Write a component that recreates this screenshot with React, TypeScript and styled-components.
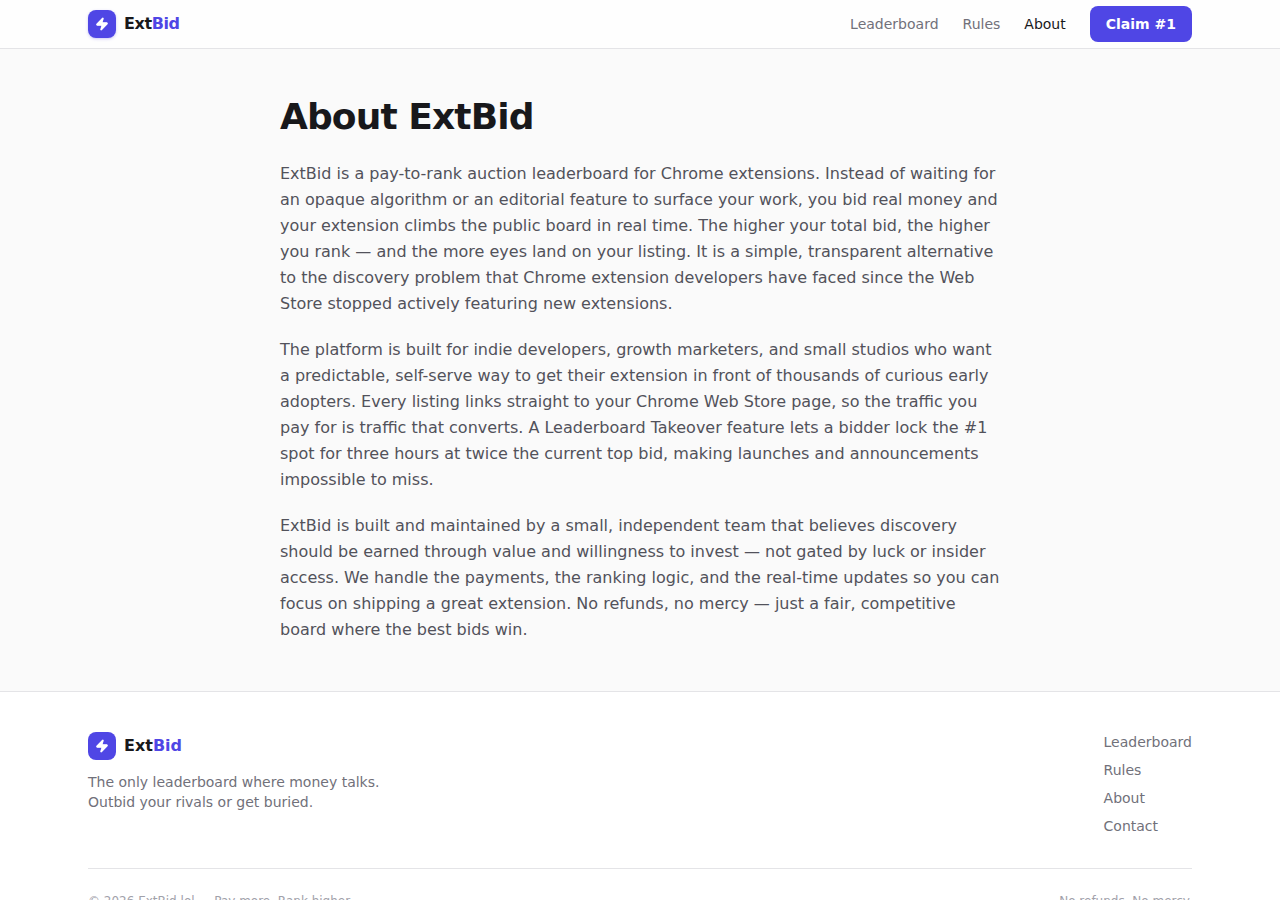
import React from 'react';
import styled, { createGlobalStyle } from 'styled-components';
import { Zap } from 'lucide-react';

const GlobalStyle = createGlobalStyle`
  *, *::before, *::after { box-sizing: border-box; }
  body {
    margin: 0;
    background: #fafafa;
    color: #18181b;
    font-family: "DejaVu Sans", sans-serif;
    font-size: 16px;
    line-height: 24px;
  }
  h1, p, ul { margin: 0; padding: 0; }
  ul { list-style: none; }
  a { color: inherit; text-decoration: none; }
`;

const Container = styled.div`
  max-width: 1152px;
  margin: 0 auto;
  padding: 0 24px;
`;

const Header = styled.header`
  background: #fefefe;
  border-bottom: 1px solid #e4e4e7;
`;

const HeaderRow = styled(Container)`
  display: flex;
  align-items: center;
  justify-content: space-between;
  height: 48px;
`;

const BrandMark = styled.span`
  display: flex;
  align-items: center;
  justify-content: center;
  width: 28px;
  height: 28px;
  border-radius: 8px;
  background: #4f46e5;
  color: #fff;
`;

const BrandLink = styled.a<{ $raised?: boolean }>`
  display: flex;
  align-items: center;
  gap: 8px;
  font-weight: 700;
  letter-spacing: ${(p) => (p.$raised ? '-0.025em' : 'normal')};

  ${BrandMark} {
    box-shadow: ${(p) => (p.$raised ? '0 1px 3px rgba(79, 70, 229, 0.3)' : 'none')};
  }
`;

const Accent = styled.span`
  color: #4f46e5;
`;

const Nav = styled.nav`
  display: flex;
  align-items: center;
  gap: 24px;
`;

const NavLink = styled.a<{ $active?: boolean }>`
  font-size: 14px;
  line-height: 20px;
  color: ${(p) => (p.$active ? '#18181b' : '#71717a')};
`;

const ClaimButton = styled.button`
  height: 36px;
  padding: 0 16px;
  border: 0;
  border-radius: 8px;
  background: #4f46e5;
  color: #fff;
  font: 600 14px/20px "DejaVu Sans", sans-serif;
  cursor: pointer;
`;

const Article = styled.main`
  max-width: 768px;
  margin: 0 auto;
  padding: 48px 24px;
`;

const Title = styled.h1`
  margin-bottom: 24px;
  font-size: 36px;
  line-height: 40px;
  font-weight: 700;
  letter-spacing: -0.025em;
`;

const Prose = styled.div`
  display: flex;
  flex-direction: column;
  gap: 20px;
  color: #52525b;
  line-height: 26px;
`;

const Footer = styled.footer`
  background: #fff;
  border-top: 1px solid #e4e4e7;
`;

const FooterInner = styled(Container)`
  padding-top: 40px;
  padding-bottom: 40px;
`;

const FooterTop = styled.div`
  display: flex;
  justify-content: space-between;
  gap: 32px;
`;

const Tagline = styled.p`
  max-width: 320px;
  margin-top: 12px;
  font-size: 14px;
  line-height: 20px;
  color: #71717a;
`;

const FooterLinks = styled.ul`
  display: flex;
  flex-direction: column;
  gap: 8px;
  font-size: 14px;
  line-height: 20px;
`;

const FooterItem = styled.li`
  display: flex;
`;

const Legal = styled.div`
  display: flex;
  justify-content: space-between;
  margin-top: 32px;
  padding-top: 24px;
  border-top: 1px solid #e4e4e7;
  font-size: 12px;
  line-height: 16px;
  color: #a1a1aa;
`;

function Brand({ raised }: { raised?: boolean }) {
  return (
    <BrandLink href="#home" $raised={raised}>
      <BrandMark>
        <Zap size={14} fill="currentColor" aria-hidden="true" />
      </BrandMark>
      <span>Ext<Accent>Bid</Accent></span>
    </BrandLink>
  );
}

const footerLinks = ['Leaderboard', 'Rules', 'About', 'Contact'];

export default function App() {
  return (
    <>
      <GlobalStyle />
      <Header>
        <HeaderRow>
          <Brand raised />
          <Nav aria-label="Main">
            <NavLink href="#leaderboard">Leaderboard</NavLink>
            <NavLink href="#rules">Rules</NavLink>
            <NavLink href="#about" $active aria-current="page">About</NavLink>
            <ClaimButton type="button">Claim #1</ClaimButton>
          </Nav>
        </HeaderRow>
      </Header>
      <Article>
        <Title>About ExtBid</Title>
        <Prose>
          <p>
            ExtBid is a pay-to-rank auction leaderboard for Chrome extensions. Instead of waiting for an opaque
            algorithm or an editorial feature to surface your work, you bid real money and your extension climbs
            the public board in real time. The higher your total bid, the higher you rank — and the more eyes
            land on your listing. It is a simple, transparent alternative to the discovery problem that Chrome
            extension developers have faced since the Web Store stopped actively featuring new extensions.
          </p>
          <p>
            The platform is built for indie developers, growth marketers, and small studios who want a
            predictable, self-serve way to get their extension in front of thousands of curious early adopters.
            Every listing links straight to your Chrome Web Store page, so the traffic you pay for is traffic
            that converts. A Leaderboard Takeover feature lets a bidder lock the #1 spot for three hours at
            twice the current top bid, making launches and announcements impossible to miss.
          </p>
          <p>
            ExtBid is built and maintained by a small, independent team that believes discovery should be earned
            through value and willingness to invest — not gated by luck or insider access. We handle the
            payments, the ranking logic, and the real-time updates so you can focus on shipping a great
            extension. No refunds, no mercy — just a fair, competitive board where the best bids win.
          </p>
        </Prose>
      </Article>
      <Footer>
        <FooterInner>
          <FooterTop>
            <div>
              <Brand />
              <Tagline>The only leaderboard where money talks. Outbid your rivals or get buried.</Tagline>
            </div>
            <FooterLinks>
              {footerLinks.map((label) => (
                <FooterItem key={label}>
                  <NavLink href={`#${label.toLowerCase()}`}>{label}</NavLink>
                </FooterItem>
              ))}
            </FooterLinks>
          </FooterTop>
          <Legal>
            <span>© 2026 ExtBid.lol — Pay more. Rank higher.</span>
            <span>No refunds. No mercy.</span>
          </Legal>
        </FooterInner>
      </Footer>
    </>
  );
}
